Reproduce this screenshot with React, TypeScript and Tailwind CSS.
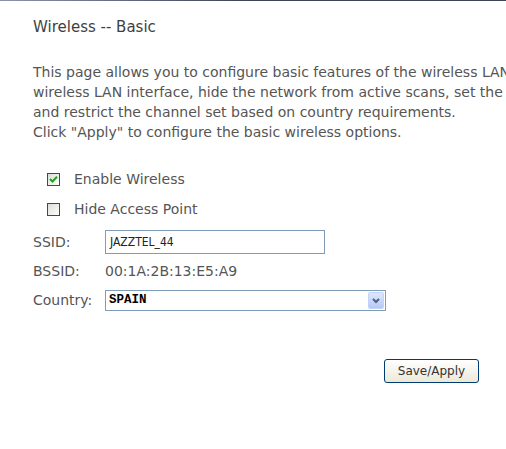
import React from "react";

function XPCheck({ checked }: { checked: boolean }) {
  return (
    <div className="w-[13px] h-[13px] border border-[#1c5180] bg-gradient-to-br from-[#dcdcd7] to-[#ffffff] flex items-center justify-center">
      {checked && (
        <svg width="9" height="9" viewBox="0 0 9 9">
          <path d="M1 4 L3.5 6.5 L8 1.8" stroke="#21a121" strokeWidth="2" fill="none" />
        </svg>
      )}
    </div>
  );
}

export default function App() {
  const font = { fontFamily: "Tahoma, 'DejaVu Sans', Verdana, sans-serif" };
  return (
    <div className="w-[506px] h-[449px] bg-white overflow-hidden relative text-[#555]" style={font}>
      <div className="h-px w-full bg-gradient-to-r from-[#8a93a8] via-[#3b4354] to-[#3b4354]" />
      <div className="pl-[33px] pt-[16px]">
        <div className="text-[15px] leading-[20px] text-[#3f3f3f] whitespace-nowrap">Wireless -- Basic</div>
        <div className="mt-[25px] text-[14px] leading-[20px] whitespace-nowrap">
          <div>This page allows you to configure basic features of the wireless LAN</div>
          <div>wireless LAN interface, hide the network from active scans, set the</div>
          <div>and restrict the channel set based on country requirements.</div>
          <div>Click "Apply" to configure the basic wireless options.</div>
        </div>
        <div className="mt-[31px] pl-[14px] flex flex-col gap-[17px] text-[14px] leading-[13px]">
          <div className="flex items-center gap-[14px]">
            <XPCheck checked />
            <span>Enable Wireless</span>
          </div>
          <div className="flex items-center gap-[14px]">
            <XPCheck checked={false} />
            <span>Hide Access Point</span>
          </div>
        </div>
        <div className="mt-[14px] flex flex-col text-[14px]">
          <div className="flex items-center h-[24px]">
            <span className="w-[72px]">SSID:</span>
            <div className="w-[220px] h-[24px] border border-[#7f9db9] flex items-center pl-[4px] text-[12px] text-[#222]" style={{ fontFamily: "'DejaVu Sans Condensed', 'Liberation Sans', sans-serif" }}>
              JAZZTEL_44
            </div>
          </div>
          <div className="flex items-center h-[20px] mt-[7px]">
            <span className="w-[72px]">BSSID:</span>
            <span>00:1A:2B:13:E5:A9</span>
          </div>
          <div className="flex items-center h-[21px] mt-[9px]">
            <span className="w-[72px]">Country:</span>
            <div className="w-[281px] h-[21px] border border-[#7f9db9] flex items-center justify-between pl-[3px] pr-[1px] shrink-0">
              <span className="text-[12.5px] font-semibold text-black" style={{ fontFamily: "'Liberation Mono', monospace" }}>SPAIN</span>
              <div className="w-[16px] h-[17px] rounded-[2px] bg-gradient-to-b from-[#dde8fc] to-[#b6c9f5] border border-[#c3d3fd] flex items-center justify-center">
                <svg width="8" height="6" viewBox="0 0 8 6">
                  <path d="M1 1 L4 4 L7 1" stroke="#4d6185" strokeWidth="2" fill="none" />
                </svg>
              </div>
            </div>
          </div>
        </div>
      </div>
      <div className="absolute left-[384px] top-[359px] w-[95px] h-[24px] rounded-[3px] border border-[#003c74] bg-gradient-to-b from-[#ffffff] to-[#ece9d8] flex items-center justify-center text-[12px] text-[#333]" style={font}>
        Save/Apply
      </div>
    </div>
  );
}
